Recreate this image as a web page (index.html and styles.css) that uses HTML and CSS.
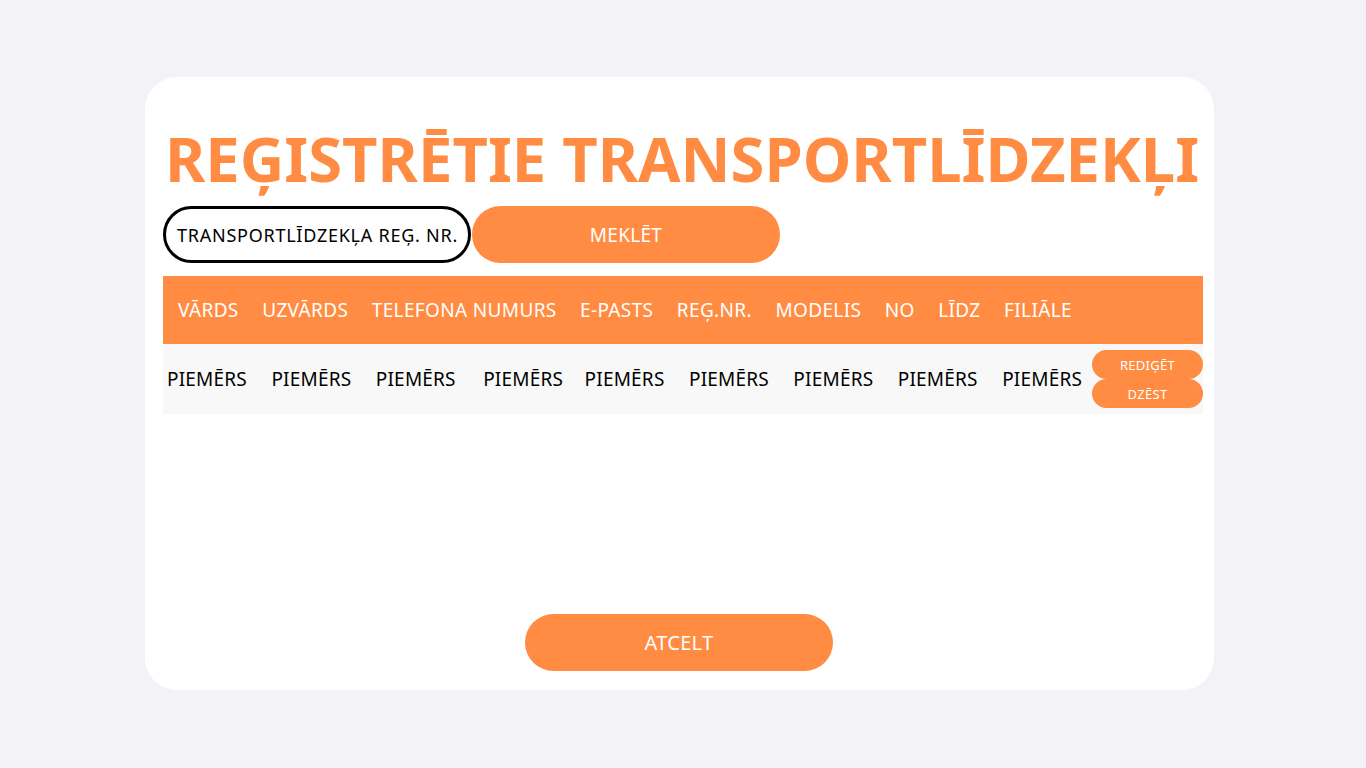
FILE: index.html
```html
<!DOCTYPE html>
<html>
  <head>
    <title>Reģistrētie transportlīdzekļi</title>
    <link rel="stylesheet" href="styles.css">
  </head>
  <body>
    <div class="card">
      <h1 class="title">REĢISTRĒTIE TRANSPORTLĪDZEKĻI</h1>

      <div class="search">
        <input class="search-input" type="text" value="TRANSPORTLĪDZEKĻA REĢ. NR.">
        <button class="search-button">MEKLĒT</button>
      </div>

      <div class="table">
        <div class="table-head">
          <span>VĀRDS</span>
          <span>UZVĀRDS</span>
          <span>TELEFONA NUMURS</span>
          <span>E-PASTS</span>
          <span>REĢ.NR.</span>
          <span>MODELIS</span>
          <span>NO</span>
          <span>LĪDZ</span>
          <span>FILIĀLE</span>
        </div>
        <div class="table-row">
          <span>PIEMĒRS</span>
          <span>PIEMĒRS</span>
          <span>PIEMĒRS</span>
          <span class="wide">PIEMĒRS</span>
          <span>PIEMĒRS</span>
          <span>PIEMĒRS</span>
          <span>PIEMĒRS</span>
          <span>PIEMĒRS</span>
          <span>PIEMĒRS</span>
          <div class="row-actions">
            <button class="small-button">REDIĢĒT</button>
            <button class="small-button">DZĒST</button>
          </div>
        </div>
      </div>

      <button class="cancel">ATCELT</button>
    </div>
  </body>
</html>
```

FILE: styles.css
```css
body{
  margin: 0;
  background-color: #f3f3f7;
  font-family: "Noto Sans", Arial, sans-serif;
}
.card{
  box-sizing: border-box;
  width: 1069px;
  height: 613px;
  margin: 77px 0 0 145px;
  padding: 0 11px 19px 18px;
  background-color: white;
  border-radius: 32px;
  display: flex;
  flex-direction: column;
}
.title{
  margin: 41px 0 0 2px;
  font-size: 61.5px;
  line-height: 80px;
  font-weight: 700;
  color: #ff8c42;
  white-space: nowrap;
}
.search{
  display: flex;
  margin-top: 8px;
}
.search-input{
  box-sizing: border-box;
  width: 308px;
  height: 57px;
  border: 3px solid black;
  border-radius: 29px;
  padding: 0 0 0 11px;
  font-family: inherit;
  font-size: 18px;
  letter-spacing: 0.75px;
  color: black;
  outline: none;
}
.search-button{
  width: 308px;
  height: 57px;
  margin-left: 1px;
  border: none;
  border-radius: 29px;
  background-color: #ff8c42;
  color: white;
  font-family: inherit;
  font-size: 19px;
  letter-spacing: 0.3px;
}
.table{
  margin-top: 13px;
}
.table-head{
  height: 68px;
  background-color: #ff8c42;
  display: flex;
  align-items: center;
  gap: 23.5px;
  padding-left: 15px;
  color: white;
  font-size: 19px;
  letter-spacing: 0.35px;
}
.table-row{
  height: 70px;
  background-color: #f8f8f8;
  display: grid;
  grid-template-columns: repeat(8, 104.4px) 1fr 111px;
  align-items: center;
  padding-left: 4px;
  color: black;
  font-size: 19px;
  letter-spacing: 0.2px;
}
.table-row .wide{
  padding-left: 3px;
}
.row-actions{
  display: flex;
  flex-direction: column;
}
.small-button{
  height: 29px;
  border: none;
  border-radius: 15px;
  background-color: #ff8c42;
  color: white;
  font-family: inherit;
  font-size: 13px;
  letter-spacing: 0.3px;
}
.cancel{
  align-self: center;
  margin: auto 8px 0 0;
  width: 308px;
  height: 57px;
  border: none;
  border-radius: 29px;
  background-color: #ff8c42;
  color: white;
  font-family: inherit;
  font-size: 20px;
  letter-spacing: 0.3px;
}
```
